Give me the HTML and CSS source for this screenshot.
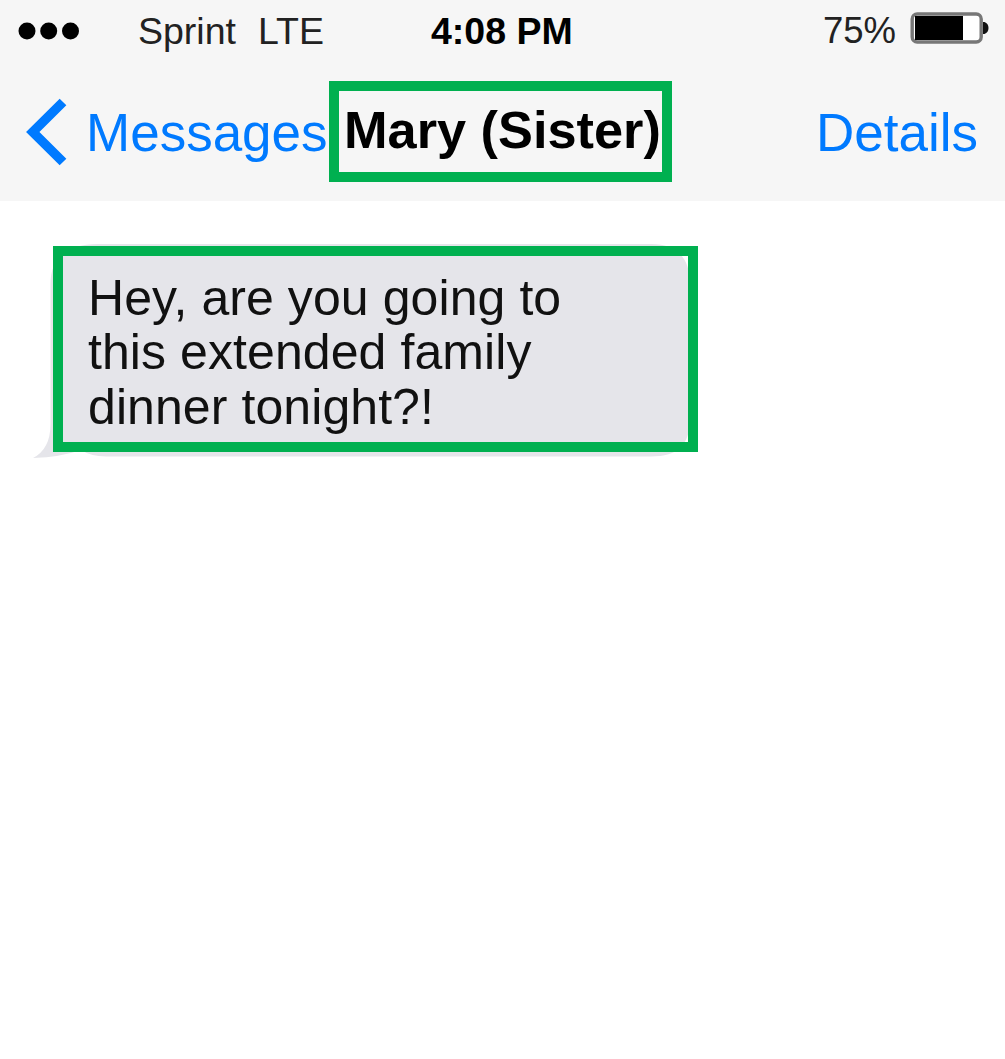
FILE: index.html
```html
<!DOCTYPE html>
<html lang="en">
<head>
<meta charset="utf-8">
<title>Messages</title>
<link rel="stylesheet" href="styles.css">
</head>
<body>
<header class="header">
  <div class="status">
    <svg class="signal" width="62" height="18" viewBox="0 0 62 18"><circle cx="9" cy="9" r="8.5"/><circle cx="30.7" cy="9" r="8.5"/><circle cx="52.5" cy="9" r="8.5"/></svg>
    <span class="carrier">Sprint</span>
    <span class="network">LTE</span>
    <span class="time">4:08 PM</span>
    <span class="percent">75%</span>
    <svg class="battery" width="80" height="34" viewBox="0 0 80 34">
      <rect x="2.200" y="3" width="69" height="28" rx="5" fill="#fff" stroke="#777" stroke-width="3.4"/>
      <rect x="5" y="5" width="48" height="24" fill="#000"/>
      <path d="M73 11h1.500q4 1.500 4 6t-4 6H73z" fill="#111"/>
    </svg>
  </div>
  <nav class="nav">
    <a class="back">
      <svg class="chevron" width="42" height="70" viewBox="0 0 42 70"><path d="M37 5L6.800 35L37 65" fill="none" stroke="#007aff" stroke-width="9.500"/></svg>
      <span class="back-label">Messages</span>
    </a>
    <h1 class="title">Mary (Sister)</h1>
    <a class="details">Details</a>
  </nav>
</header>
<main class="thread">
  <article class="message">
    <svg class="bubble" width="660" height="218" viewBox="0 0 660 218">
      <path fill="#e5e5ea" d="M65 2H618C645 2 657 17 657 42V176C657 203 645 214.500 618 214.500H73Q58 214.500 48 208Q28 215 0 216Q17.500 207 17.500 182V42C17.500 15 35 2 65 2Z"/>
    </svg>
    <p class="text">Hey, are you going to<br>this extended family<br>dinner tonight?!</p>
  </article>
</main>
</body>
</html>
```
FILE: styles.css
```css
body {
  margin: 0;
  min-height: 1059px;
  background: #fff;
  font-family: "Liberation Sans", Arial, sans-serif;
  color: #000;
}

.header {
  box-sizing: border-box;
  height: 201px;
  background: #f6f6f6;
}

.status {
  display: flex;
  align-items: center;
  height: 62px;
  font-size: 37.5px;
  line-height: 62px;
  white-space: nowrap;
}

.signal {
  margin-left: 18px;
}

.carrier {
  width: 99px;
  margin-left: 58px;
  color: #222;
}

.network {
  width: 70px;
  margin-left: 21px;
  color: #222;
}

.time {
  width: 144px;
  margin-left: 103px;
  font-weight: bold;
}

.percent {
  width: 76px;
  margin-left: 248px;
  font-size: 36.5px;
  color: #222;
}

.battery {
  margin: -6px 0 0 11px;
}

.nav {
  display: flex;
  align-items: center;
  height: 101px;
  margin-top: 19px;
  white-space: nowrap;
}

.back {
  display: flex;
  align-items: center;
  width: 303px;
  margin-left: 26px;
}

.chevron {
  flex: none;
}

.back-label,
.details {
  font-size: 53px;
  line-height: 62px;
  color: #007aff;
}

.back-label {
  margin: 2px 0 0 18px;
}

.title {
  box-sizing: border-box;
  width: 343px;
  height: 101px;
  margin: 0;
  padding-left: 5px;
  border: 10px solid #00b050;
  font-size: 52.3px;
  line-height: 78px;
}

.details {
  margin: 2px 0 0 144px;
}

.thread {
  padding: 45px 0 0 53px;
}

.message {
  position: relative;
  box-sizing: border-box;
  width: 645px;
  height: 206px;
  border: 10px solid #00b050;
}

/* The bubble and its tail extend behind the highlight frame. */
.bubble {
  position: absolute;
  z-index: -1;
  top: -14px;
  left: -30px;
}

.text {
  margin: 0;
  padding: 14.5px 0 0 25px;
  font-size: 50px;
  line-height: 54.7px;
  letter-spacing: 0.08px;
  white-space: nowrap;
  color: #111;
}
```
